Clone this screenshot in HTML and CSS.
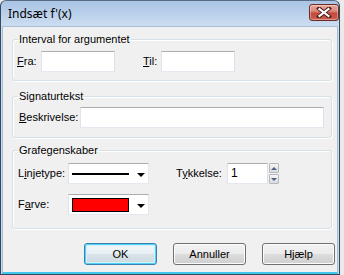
FILE: index.html
```html
<!DOCTYPE html>
<html lang="da">
<head>
<meta charset="utf-8">
<title>Indsæt f'(x)</title>
<link rel="stylesheet" href="styles.css">
</head>
<body>
<div class="window">
  <div class="titlebar">
    <span class="title">Indsæt f'(x)</span>
    <div class="close">
      <svg width="16" height="11" viewBox="0 0 16 11">
        <path d="M3 1.5 L13 9.5 M13 1.5 L3 9.5" stroke="#4a1a18" stroke-width="4" stroke-linecap="square"/>
        <path d="M3.5 2 L12.5 9 M12.5 2 L3.5 9" stroke="#ffffff" stroke-width="2.2" stroke-linecap="square"/>
      </svg>
    </div>
  </div>
  <div class="client">
    <fieldset class="group g1">
      <legend>Interval for argumentet</legend>
      <div class="row">
        <label class="lbl lbl-fra"><u>F</u>ra:</label>
        <div class="edit w74"></div>
        <label class="lbl lbl-til"><u>T</u>il:</label>
        <div class="edit w74"></div>
      </div>
    </fieldset>
    <fieldset class="group g2">
      <legend>Signaturtekst</legend>
      <div class="row">
        <label class="lbl lbl-besk"><u>B</u>eskrivelse:</label>
        <div class="edit w244"></div>
      </div>
    </fieldset>
    <fieldset class="group g3">
      <legend>Grafegenskaber</legend>
      <div class="row">
        <label class="lbl lbl-g3">L<u>i</u>njetype:</label>
        <div class="combo">
          <span class="linesample"></span>
          <span class="arrow"></span>
        </div>
        <label class="lbl lbl-tyk">T<u>y</u>kkelse:</label>
        <div class="edit w41 spinedit">1</div>
        <div class="spin">
          <div class="spinbtn"><span class="up"></span></div>
          <div class="spinbtn"><span class="down"></span></div>
        </div>
      </div>
      <div class="row row2">
        <label class="lbl lbl-g3">F<u>a</u>rve:</label>
        <div class="combo">
          <span class="swatch"></span>
          <span class="arrow"></span>
        </div>
      </div>
    </fieldset>
    <div class="buttons">
      <button class="btn default">OK</button>
      <button class="btn">Annuller</button>
      <button class="btn">Hjælp</button>
    </div>
  </div>
</div>
</body>
</html>
```
FILE: styles.css
```css
html, body {
  margin: 0;
  padding: 0;
}
body {
  background: #eaeaea;
  font-family: "Liberation Sans", Arial, sans-serif;
  font-size: 11px;
  color: #000;
}
.window {
  width: 340px;
  height: 275px;
  box-sizing: border-box;
  border: 1px solid #34495f;
  border-top-color: #5a6d82;
  border-radius: 6px 6px 0 0;
  background: linear-gradient(#a9c4e5 0px, #cddef1 26px, #c5d8ee 100%);
  display: flex;
  flex-direction: column;
}
.titlebar {
  height: 25px;
  flex: none;
  display: flex;
  align-items: flex-start;
  justify-content: space-between;
}
.title {
  font-family: "Noto Sans", "Liberation Sans", sans-serif;
  font-size: 12px;
  line-height: 16px;
  margin: 5px 0 0 7px;
  color: #000;
}
.close {
  width: 30px;
  height: 17px;
  box-sizing: border-box;
  margin: 3px 0 0 0;
  border: 1px solid #6b2a25;
  border-radius: 3px;
  background: linear-gradient(#e9a99b 0%, #d98a7c 40%, #c44b3b 55%, #c95d4c 100%);
  box-shadow: inset 0 0 0 1px rgba(255,255,255,0.35);
  display: flex;
  align-items: center;
  justify-content: center;
}
.client {
  flex: 1;
  margin: 0 1px 0 1px;
  background: #f0f0f0;
  border: 1px solid #a9bdd4;
  border-bottom: 2px solid #3ec7ea;
  padding: 6px 5px 0 9px;
  display: flex;
  flex-direction: column;
}
.group {
  margin: 0;
  padding: 5px 5px 8px 5px;
  border: 1px solid #d5dfe5;
  border-radius: 3px;
  box-shadow: inset 1px 1px 0 #ffffff, 1px 1px 0 #ffffff;
  min-width: 0;
}
.group legend {
  padding: 0 1px;
  margin: 0;
  line-height: 13px;
}
.g2 {
  margin-top: 9px;
  padding-top: 4px;
  padding-bottom: 9px;
}
.g3 {
  margin-top: 6px;
  padding-top: 6px;
  padding-bottom: 13px;
}
.row {
  display: flex;
  align-items: center;
}
.row2 {
  margin-top: 10px;
}
.lbl {
  flex: none;
  line-height: 13px;
}
.lbl-fra { width: 24px; margin-left: -1px; }
.lbl-til { width: 18px; margin-left: 28px; }
.lbl-besk { width: 61px; margin-left: 1px; }
.lbl-g3 { width: 50px; }
.lbl-tyk { width: 51px; margin-left: 27px; }
.edit {
  height: 21px;
  box-sizing: border-box;
  background: #fff;
  border: 1px solid #e3e9ef;
  border-top-color: #abadb3;
  border-left-color: #e2e3ea;
  border-right-color: #dbdfe6;
  flex: none;
}
.w74 { width: 74px; }
.w244 { width: 244px; }
.w41 { width: 41px; }
.spinedit {
  padding: 0 0 0 3px;
  line-height: 19px;
  font-size: 12px;
}
.spin {
  display: flex;
  flex-direction: column;
  gap: 1px;
  margin-left: 1px;
  height: 21px;
}
.spinbtn {
  width: 10px;
  height: 10px;
  box-sizing: border-box;
  border: 1px solid #b5b8bd;
  border-radius: 1px;
  background: linear-gradient(#f6f6f6, #dcdcdc);
  display: flex;
  align-items: center;
  justify-content: center;
}
.up, .down {
  width: 0;
  height: 0;
  border-left: 3px solid transparent;
  border-right: 3px solid transparent;
}
.up { border-bottom: 3px solid #4d6185; }
.down { border-top: 3px solid #4d6185; }
.combo {
  width: 81px;
  height: 21px;
  box-sizing: border-box;
  background: #fff;
  border: 1px solid #e3e9ef;
  border-top-color: #abadb3;
  border-left-color: #e2e3ea;
  flex: none;
  display: flex;
  align-items: center;
  padding-left: 3px;
}
.linesample {
  width: 57px;
  height: 2px;
  background: #000;
  margin-top: 1px;
}
.swatch {
  width: 57px;
  height: 14px;
  box-sizing: border-box;
  background: #ff0000;
  border: 1px solid #000;
}
.arrow {
  width: 0;
  height: 0;
  margin-left: 8px;
  margin-top: 2px;
  border-left: 4px solid transparent;
  border-right: 4px solid transparent;
  border-top: 4px solid #000;
}
.buttons {
  display: flex;
  margin-top: 14px;
  margin-right: -3px;
  justify-content: flex-end;
  gap: 16px;
}
.btn {
  width: 73px;
  height: 22px;
  box-sizing: border-box;
  font-family: "Liberation Sans", Arial, sans-serif;
  font-size: 11px;
  color: #000;
  border: 1px solid #707070;
  border-radius: 3px;
  background: linear-gradient(#f2f2f2 0%, #ebebeb 50%, #dddddd 51%, #cfcfcf 100%);
  box-shadow: inset 0 0 0 1px #fcfcfc;
  padding: 0;
}
.btn.default {
  border-color: #3c7fb1;
  box-shadow: inset 0 0 0 1px #4fd4f7, inset 0 0 0 2px #d4f1fb;
  background: linear-gradient(#f1f6f9 0%, #e8eff3 50%, #d9e3e9 51%, #cdd9e0 100%);
}
```
